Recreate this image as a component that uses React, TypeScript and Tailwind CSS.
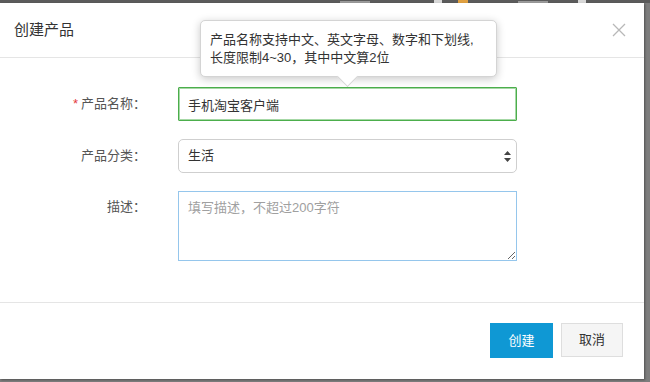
const font = "font-['Liberation_Sans','Noto_Sans_CJK_SC',sans-serif]"

function Label({ text, required }: { text: string; required?: boolean }) {
  return (
    <div className="w-[146px] shrink-0 text-right text-[13px] text-[#555]">
      {required && <span className="mr-[3px] text-[#e4393c]">*</span>}
      {text}
    </div>
  )
}

export default function App() {
  return (
    <div className={`${font} flex h-[382px] w-[650px] flex-col overflow-hidden bg-[#7d7d7d]`}>
      {/* blurred page behind the dialog */}
      <div className="flex h-[3px] shrink-0 items-end bg-[#5b5b5b]">
        <span className="ml-[340px] h-[2px] w-[30px] bg-[#9a9a9a]" />
        <span className="ml-[64px] h-[3px] w-[8px] bg-[#d8d8d8]" />
        <span className="ml-[16px] h-[3px] w-[10px] bg-[#e0a040]" />
        <span className="ml-[50px] h-[2px] w-[30px] bg-[#9a9a9a]" />
        <span className="ml-[30px] h-[3px] w-[8px] bg-[#d8d8d8]" />
      </div>

      <div className="flex flex-1 pr-[6px] pb-[3px]">
        <div className="relative flex flex-1 flex-col bg-white shadow-[1px_1px_2px_rgba(0,0,0,0.35)]">
          {/* header */}
          <div className="flex h-[55px] shrink-0 items-center justify-between border-b border-[#e5e5e5] pl-[14px] pr-[17px]">
            <h2 className="text-[15px] text-[#333]">创建产品</h2>
            <svg width="16" height="16" viewBox="0 0 16 16" className="text-[#b8b8b8]">
              <path d="M2 2 L14 14 M14 2 L2 14" stroke="currentColor" strokeWidth="1.3" />
            </svg>
          </div>

          {/* body */}
          <div className="flex flex-1 flex-col gap-[18px] pt-[29px]">
            <div className="flex items-center">
              <Label text="产品名称：" required />
              <input
                readOnly
                value="手机淘宝客户端"
                className="ml-[32px] h-[34px] w-[339px] rounded-[1px] border border-[#4cae4c] px-[9px] text-[13px] text-[#333] shadow-[inset_0_0_0_1px_rgba(92,184,92,0.55)] outline-none"
              />
            </div>
            <div className="flex items-center">
              <Label text="产品分类：" />
              <div className="relative ml-[32px] w-[339px]">
                <select className="h-[34px] w-full appearance-none rounded-[5px] border border-[#cfcfcf] bg-white px-[9px] text-[13px] text-[#333] outline-none">
                  <option>生活</option>
                </select>
                <svg width="7" height="11" viewBox="0 0 7 11" className="pointer-events-none absolute right-[6px] top-[12px] text-[#444]">
                  <path d="M3.5 0 L7 4 L0 4 Z M3.5 11 L7 7 L0 7 Z" fill="currentColor" />
                </svg>
              </div>
            </div>
            <div className="flex items-start">
              <div className="pt-[6px]">
                <Label text="描述：" />
              </div>
              <textarea
                placeholder="填写描述，不超过200字符"
                className="ml-[32px] h-[70px] w-[339px] border border-[#95c6ec] px-[9px] py-[6px] text-[13px] text-[#333] outline-none placeholder:text-[#a0a0a0]"
              />
            </div>
          </div>

          {/* footer */}
          <div className="flex h-[77px] shrink-0 items-start justify-end gap-[8px] border-t border-[#e5e5e5] pr-[21px] pt-[20px]">
            <button className="h-[35px] w-[63px] bg-[#0f98d4] text-[13px] text-white">创建</button>
            <button className="h-[34px] w-[62px] border border-[#dedede] bg-[#f5f5f5] text-[13px] text-[#333]">取消</button>
          </div>

          {/* tooltip */}
          <div className="absolute left-[200px] top-[17px] w-[297px] rounded-[5px] border border-[#d4d4d4] bg-white px-[9px] pb-[9px] pt-[10px] text-[13px] leading-[18px] text-[#333] shadow-[0_2px_8px_rgba(0,0,0,0.22)]">
            <div>产品名称支持中文、英文字母、数字和下划线,</div>
            <div>长度限制4~30，其中中文算2位</div>
            <span className="absolute bottom-[-8px] left-[139px] h-[15px] w-[15px] rotate-45 border-b border-r border-[#d4d4d4] bg-white" />
          </div>
        </div>
      </div>
    </div>
  )
}
